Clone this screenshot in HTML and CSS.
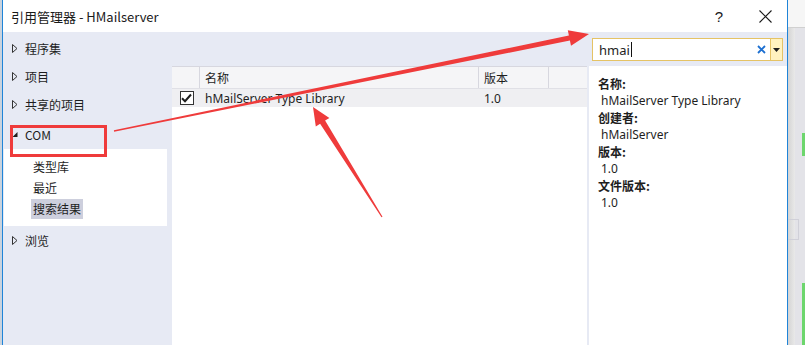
FILE: index.html
```html
<!DOCTYPE html>
<html lang="zh-CN">
<head>
<meta charset="utf-8">
<title>引用管理器 - HMailserver</title>
<link rel="stylesheet" href="styles.css">
</head>
<body>
<div class="screen">
  <div class="edge-left"></div>
  <div class="window">
    <div class="titlebar">
      <span class="title">引用管理器 - HMailserver</span>
      <span class="help">?</span>
      <svg class="close" width="13" height="13" viewBox="0 0 13 13"><path d="M0.5 0.5L12.5 12.5M12.5 0.5L0.5 12.5" stroke="#1a1a1a" stroke-width="1.1" fill="none"/></svg>
    </div>
    <div class="body">
      <nav class="nav">
        <div class="nav-item"><svg class="tri" width="6" height="9" viewBox="0 0 6 9"><path d="M0.5 0.5L5 4.5L0.5 8.5Z" fill="none" stroke="#333" stroke-width="1"/></svg>程序集</div>
        <div class="nav-item"><svg class="tri" width="6" height="9" viewBox="0 0 6 9"><path d="M0.5 0.5L5 4.5L0.5 8.5Z" fill="none" stroke="#333" stroke-width="1"/></svg>项目</div>
        <div class="nav-item"><svg class="tri" width="6" height="9" viewBox="0 0 6 9"><path d="M0.5 0.5L5 4.5L0.5 8.5Z" fill="none" stroke="#333" stroke-width="1"/></svg>共享的项目</div>
        <div class="nav-item com"><svg class="tri" width="6" height="9" viewBox="0 0 6 9"><path d="M5.5 2L5.5 7L0.5 7Z" fill="#1e1e1e"/></svg>COM</div>
        <div class="sub">
          <div class="sub-item"><span>类型库</span></div>
          <div class="sub-item"><span>最近</span></div>
          <div class="sub-item active"><span>搜索结果</span></div>
        </div>
        <div class="nav-item"><svg class="tri" width="6" height="9" viewBox="0 0 6 9"><path d="M0.5 0.5L5 4.5L0.5 8.5Z" fill="none" stroke="#333" stroke-width="1"/></svg>浏览</div>
      </nav>
      <div class="main">
        <div class="toolbar">
          <div class="search">
            <span class="search-text">hmai</span><span class="caret"></span>
            <svg class="clear" width="9" height="9" viewBox="0 0 9 9"><path d="M1 1L8 8M8 1L1 8" stroke="#1c6fd1" stroke-width="1.8" fill="none"/></svg>
            <span class="drop"><svg width="7" height="4" viewBox="0 0 7 4"><path d="M0 0H7L3.5 4Z" fill="#1e1e1e"/></svg></span>
          </div>
        </div>
        <div class="content">
          <div class="list">
            <div class="list-head">
              <div class="col-check"></div>
              <div class="col-name">名称</div>
              <div class="col-ver">版本</div>
              <div class="col-rest"></div>
            </div>
            <div class="list-row">
              <div class="col-check"><span class="checkbox"><svg width="11" height="10" viewBox="0 0 11 10"><path d="M1 5.2L4 8.2L10 1.5" stroke="#1e1e1e" stroke-width="2" fill="none"/></svg></span></div>
              <div class="col-name">hMailServer Type Library</div>
              <div class="col-ver">1.0</div>
              <div class="col-rest"></div>
            </div>
          </div>
          <div class="details">
            <div class="label">名称:</div>
            <div class="value">hMailServer Type Library</div>
            <div class="label">创建者:</div>
            <div class="value">hMailServer</div>
            <div class="label">版本:</div>
            <div class="value">1.0</div>
            <div class="label">文件版本:</div>
            <div class="value">1.0</div>
          </div>
        </div>
      </div>
    </div>
  </div>
  <div class="outside">
    <div class="outside-top"><span class="eq">=</span></div>
    <div class="outside-body">
      <div class="shade"></div>
      <div class="lane">
        <div class="green g1"></div>
        <div class="green g2"></div>
      </div>
      <div class="ghost-box"></div>
    </div>
  </div>
  <svg class="annot" width="805" height="345" viewBox="0 0 805 345">
    <rect x="11.5" y="126.5" width="94" height="29" fill="none" stroke="#ef3b3b" stroke-width="3"/>
    <polygon fill="#ef3b3b" points="113.9,130.3 568.9,35.5 567.8,30.2 589,34 571,45.8 569.9,40.5 114.1,131.7"/>
    <polygon fill="#ef3b3b" points="381.5,217.3 320.1,123.8 315.8,126.5 313,107 329.4,118 325.1,120.6 382.5,216.7"/>
  </svg>
</div>
</body>
</html>
```

FILE: styles.css
```css
* { box-sizing: border-box; }
html, body { margin: 0; padding: 0; }
body {
  font-family: "Noto Sans", "Noto Sans CJK SC", sans-serif;
  font-size: 12px;
  color: #1e1e1e;
  background: #f0f0f0;
}
.screen {
  position: relative;
  width: 805px;
  height: 345px;
  overflow: hidden;
  display: flex;
}
.edge-left {
  width: 2px;
  background: #c9d3de;
}
.window {
  width: 786px;
  height: 345px;
  border-left: 1px solid #1f84d8;
  border-right: 1px solid #1f84d8;
  display: flex;
  flex-direction: column;
  background: #e7eaf4;
}
.titlebar {
  height: 32px;
  background: #ffffff;
  display: flex;
  align-items: center;
  padding-left: 8px;
  flex-shrink: 0;
}
.title {
  font-family: "Noto Sans CJK SC", sans-serif;
  font-size: 13px;
  color: #1a1a1a;
  flex: 1;
}
.help {
  font-family: "Liberation Sans", sans-serif;
  font-size: 15px;
  margin-right: 36px;
  color: #1a1a1a;
}
.close { margin-right: 15px; }
.body {
  flex: 1;
  display: flex;
}
.nav {
  width: 169px;
  padding-top: 2px;
  font-family: "Noto Sans CJK SC", sans-serif;
}
.nav-item {
  height: 28px;
  display: flex;
  align-items: center;
  padding-left: 9px;
}
.nav-item.com { margin-top: 2px; }
.tri { margin-right: 7px; flex-shrink: 0; }
.sub {
  margin: 1px 5px 0 1px;
  background: #ffffff;
  padding: 7px 0;
}
.sub-item {
  height: 21px;
  display: flex;
  align-items: center;
  padding-left: 27px;
}
.sub-item span {
  padding: 0 2px;
  line-height: 20px;
}
.sub-item.active span { background: #cdcfdd; }
.main {
  flex: 1;
  display: flex;
  flex-direction: column;
}
.toolbar {
  height: 34px;
  display: flex;
  justify-content: flex-end;
  padding: 6px 4px 0 0;
}
.search {
  width: 191px;
  height: 23px;
  border: 1px solid #e5c365;
  background: #ffffff;
  display: flex;
  align-items: center;
  padding-left: 6px;
  font-size: 13px;
}
.search-text { color: #1e1e1e; }
.caret {
  width: 1px;
  height: 15px;
  background: #111;
  margin-left: 1px;
}
.clear { margin-left: auto; margin-right: 4px; }
.drop {
  width: 12px;
  height: 21px;
  background: #fff2c0;
  border-left: 1px solid #e5c365;
  display: flex;
  align-items: center;
  justify-content: center;
}
.content {
  flex: 1;
  display: flex;
  gap: 2px;
}
.list {
  width: 415px;
  background: #ffffff;
}
.list-head {
  height: 23px;
  display: flex;
  background: #f5f5f7;
  border-top: 1px solid #d7d7df;
  border-bottom: 1px solid #e0e0e6;
  font-family: "Noto Sans CJK SC", sans-serif;
}
.list-head > div {
  display: flex;
  align-items: center;
  border-right: 1px solid #d7d7df;
}
.list-row {
  height: 18px;
  display: flex;
  background: #efeff2;
}
.list-row > div { display: flex; align-items: center; }
.col-check { width: 28px; justify-content: center; }
.col-name { width: 279px; padding-left: 5px; }
.col-ver { width: 70px; padding-left: 5px; }
.col-rest { flex: 1; }
.list-head .col-rest { border-right: none; }
.checkbox {
  width: 14px;
  height: 14px;
  border: 1px solid #333;
  background: #fff;
  display: flex;
  align-items: center;
  justify-content: center;
  margin-left: 1px;
}
.details {
  flex: 1;
  background: #ffffff;
  padding: 9px 0 0 9px;
  line-height: 17px;
}
.label {
  font-family: "Noto Sans CJK SC", sans-serif;
  font-weight: bold;
}
.value { padding-left: 3px; }
.outside {
  width: 17px;
  display: flex;
  flex-direction: column;
}
.outside-top {
  height: 28px;
  background: #f6f6f6;
  border-bottom: 1px solid #d0d0d0;
  position: relative;
}
.eq {
  position: absolute;
  left: 10px;
  bottom: -9px;
  font-size: 9px;
  line-height: 9px;
  color: #555;
}
.outside-body {
  flex: 1;
  display: flex;
  background: #ebebeb;
  position: relative;
}
.shade {
  width: 7px;
  background: linear-gradient(to right, #d4d4d4, #e9e9e9);
}
.lane {
  flex: 1;
  background: #e3e3e8;
  position: relative;
}
.green {
  position: absolute;
  right: 0;
  width: 3px;
  background: #6dd66d;
}
.g1 { top: 105px; height: 23px; }
.g2 { top: 255px; height: 80px; }
.ghost-box {
  position: absolute;
  left: 0;
  top: 191px;
  width: 11px;
  height: 21px;
  border: 1px solid #d0d0d8;
  border-left: none;
}
.annot {
  position: absolute;
  left: 0;
  top: 0;
  pointer-events: none;
}
```
